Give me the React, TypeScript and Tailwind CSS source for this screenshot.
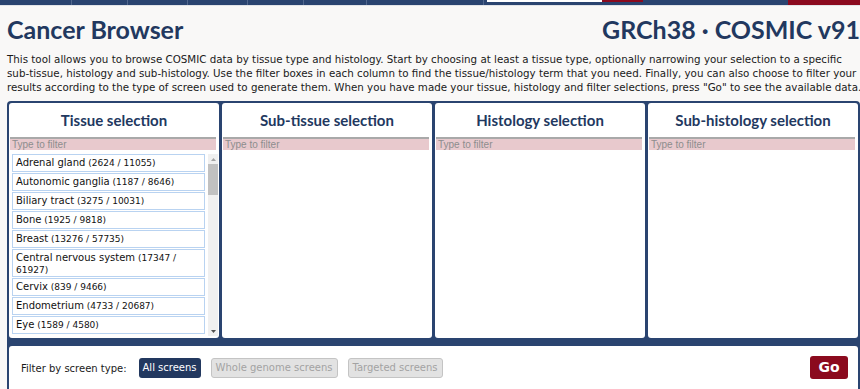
import React from 'react';

const tissues: [string, string][] = [
  ['Adrenal gland', '(2624 / 11055)'],
  ['Autonomic ganglia', '(1187 / 8646)'],
  ['Biliary tract', '(3275 / 10031)'],
  ['Bone', '(1925 / 9818)'],
  ['Breast', '(13276 / 57735)'],
  ['Central nervous system', '(17347 / 61927)'],
  ['Cervix', '(839 / 9466)'],
  ['Endometrium', '(4733 / 20687)'],
  ['Eye', '(1589 / 4580)'],
];

function FilterBox() {
  return (
    <div className="ml-[1px] mr-[3px] h-[13px] border-t-2 border-[#a9a9a9] bg-[#e8c9cd] pl-[2px] font-['Liberation_Sans',sans-serif] text-[10px] leading-[11px] text-[#8d8d8d]">
      Type to filter
    </div>
  );
}

function Header({ title }: { title: string }) {
  return (
    <div className="flex h-[34px] items-center justify-center font-['Lato',sans-serif] text-[15px] font-bold text-[#22385f]">
      {title}
    </div>
  );
}

function Scrollbar() {
  return (
    <div className="ml-[3px] flex w-[10px] flex-col bg-[#f0f0f0]">
      <div className="flex h-[10px] items-center justify-center">
        <svg width="5" height="3" viewBox="0 0 5 3"><path d="M2.5 0 L5 3 L0 3 Z" fill="#a3a3a3" /></svg>
      </div>
      <div className="h-[31px] bg-[#c1c1c1]" />
      <div className="flex-1" />
      <div className="flex h-[10px] items-center justify-center">
        <svg width="5" height="3" viewBox="0 0 5 3"><path d="M0 0 L5 0 L2.5 3 Z" fill="#505050" /></svg>
      </div>
    </div>
  );
}

export default function App() {
  return (
    <div className="relative h-[389px] w-[860px] overflow-hidden bg-[#f9f8f7] font-['DejaVu_Sans',sans-serif]">
      {/* top nav */}
      <div className="flex h-[6px] border-b border-[#e2e4e8] bg-[#2a4470]">
        <div className="w-[72px] border-r border-[#51678d]" />
        <div className="w-[56px] border-r border-[#51678d]" />
        <div className="w-[60px] border-r border-[#51678d]" />
        <div className="w-[60px] border-r border-[#51678d]" />
        <div className="w-[56px] border-r border-[#51678d]" />
        <div className="w-[63px] border-r border-[#51678d]" />
        <div className="w-[117px] border-r border-[#51678d]" />
        <div className="w-[304px]">
          <div className="flex h-[2px]">
            <div className="w-[3px]" />
            <div className="w-[115px] bg-white" />
            <div className="w-[41px] bg-[#8b0a1e]" />
          </div>
        </div>
        <div className="flex-1 bg-[#8b0a1e]" />
      </div>

      {/* title row */}
      <div className="ml-[7px] mt-[10px] flex w-[853px] items-end justify-between font-['Lato',sans-serif] text-[25px] font-bold leading-[26px] text-[#22385f]">
        <div>Cancer Browser</div>
        <div className="whitespace-nowrap">GRCh38 · COSMIC v91</div>
      </div>

      <p className="ml-[7px] mt-[10px] w-[875px] text-[10.3px] leading-[14px] text-[#1a1a1a]">
        This tool allows you to browse COSMIC data by tissue type and histology. Start by choosing at least a tissue type, optionally narrowing your selection to a specific<br />
        sub-tissue, histology and sub-histology. Use the filter boxes in each column to find the tissue/histology term that you need. Finally, you can also choose to filter your<br />
        results according to the type of screen used to generate them. When you have made your tissue, histology and filter selections, press "Go" to see the available data.
      </p>

      {/* main panel */}
      <div className="ml-[7px] mt-[7px] w-[853px] rounded-[4px] bg-[#2a4470] p-[2px]">
        <div className="grid grid-cols-4 gap-[3px]">
          <div className="h-[235px] rounded-[3px] bg-white">
            <Header title="Tissue selection" />
            <FilterBox />
            <div className="mt-[4px] flex h-[182px] overflow-hidden">
              <div className="ml-[3px] w-[193px] overflow-hidden">
                {tissues.map(([name, count]) => (
                  <div
                    key={name}
                    className="mb-[1px] border border-[#b9d3f1] px-[3px] py-[1px] text-[9px] leading-[10px] text-[#111]"
                  >
                    <span className="text-[10px] leading-[14px]">{name}</span>{' '}
                    <span>{count}</span>
                  </div>
                ))}
              </div>
              <Scrollbar />
            </div>
          </div>
          <div className="h-[235px] rounded-[3px] bg-white">
            <Header title="Sub-tissue selection" />
            <FilterBox />
          </div>
          <div className="h-[235px] rounded-[3px] bg-white">
            <Header title="Histology selection" />
            <FilterBox />
          </div>
          <div className="h-[235px] rounded-[3px] bg-white">
            <Header title="Sub-histology selection" />
            <FilterBox />
          </div>
        </div>

        <div className="mt-[8px] flex h-[60px] items-start rounded-[3px] bg-white pl-[12px] pr-[10px] pt-[10px]">
          <div className="mt-[2px] flex items-center gap-[10px] text-[10px] text-[#1a1a1a]">
            <span className="mr-[2px]">Filter by screen type:</span>
            <span className="rounded-[3px] bg-[#22385f] px-[4px] leading-[20px] text-white">All screens</span>
            <span className="rounded-[3px] border border-[#c4c4c4] bg-[#e2e2e2] px-[4px] leading-[18px] text-[#a3a3a3]">Whole genome screens</span>
            <span className="rounded-[3px] border border-[#c4c4c4] bg-[#e2e2e2] px-[4px] leading-[18px] text-[#a3a3a3]">Targeted screens</span>
          </div>
          <div className="flex-1" />
          <div className="flex h-[23px] w-[38px] items-center justify-center rounded-[3px] bg-[#8b0a1e] text-[14px] font-bold text-white">
            Go
          </div>
        </div>
      </div>
    </div>
  );
}
